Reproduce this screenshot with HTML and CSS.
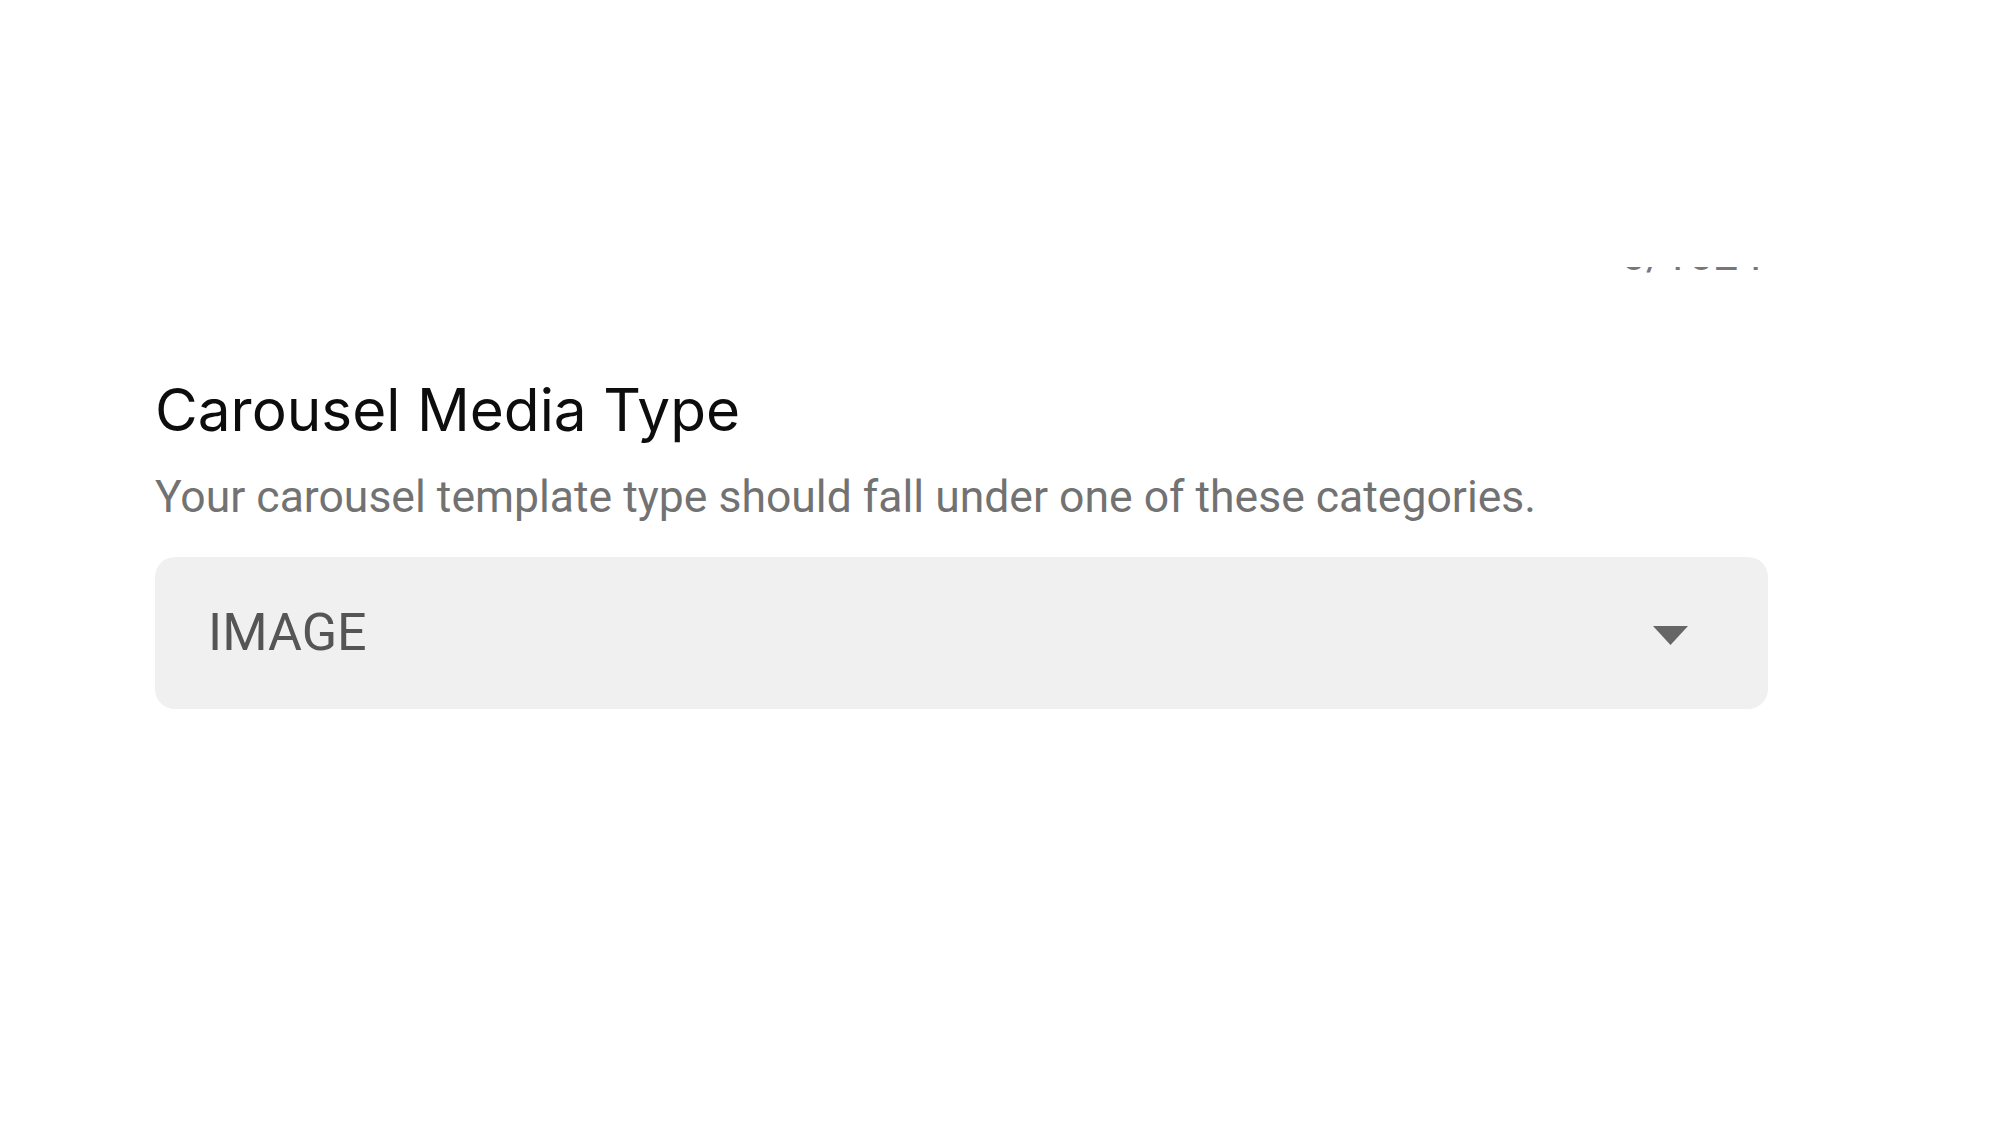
FILE: index.html
```html
<!DOCTYPE html>
<html lang="en">
<head>
<meta charset="utf-8">
<title>Carousel Media Type</title>
<link rel="stylesheet" href="styles.css">
</head>
<body>
<main class="page">
  <div class="counter-clip"><span class="counter">0/1024</span></div>
  <section class="field">
    <h2 class="field-title">Carousel Media Type</h2>
    <p class="field-desc">Your carousel template type should fall under one of these categories.</p>
    <div class="select">
      <span class="select-value">IMAGE</span>
      <svg class="select-arrow" width="35" height="19" viewBox="0 0 35 19" aria-hidden="true"><path d="M0 0 H35 L17.5 19 Z" fill="#666666"/></svg>
    </div>
  </section>
</main>
</body>
</html>
```

FILE: styles.css
```css
html, body {
  margin: 0;
  padding: 0;
  background: #ffffff;
}
body {
  font-family: Roboto, "Noto Sans", "Liberation Sans", sans-serif;
}
.page {
  padding-left: 155px;
  width: 1613px;
}
.counter-clip {
  margin-top: 267px;
  height: 6px;
  overflow: hidden;
  display: flex;
  justify-content: flex-end;
  align-items: flex-end;
  padding-right: 5px;
}
.counter {
  font-size: 44px;
  line-height: 35px;
  color: #777777;
}
.field-title {
  margin: 101px 0 0 0;
  font-family: Inter, Roboto, "Liberation Sans", sans-serif;
  font-size: 58.5px;
  line-height: 72px;
  font-weight: 400;
  color: #0d0d0d;
}
.field-desc {
  margin: 25px 0 0 0;
  font-size: 44.5px;
  line-height: 52px;
  color: #727272;
}
.select {
  margin-top: 34px;
  height: 152px;
  background: #f0f0f0;
  border-radius: 20px;
  display: flex;
  align-items: center;
  justify-content: space-between;
  padding: 0 80px 0 53px;
}
.select-value {
  font-size: 52px;
  line-height: 52px;
  color: #555555;
}
.select-arrow {
  display: block;
  margin-top: 4px;
}
```
